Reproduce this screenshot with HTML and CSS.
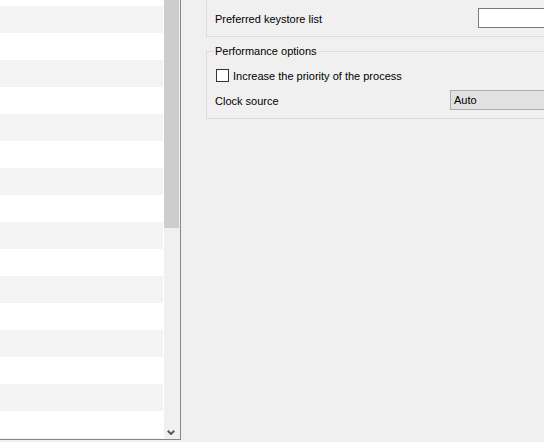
FILE: index.html
```html
<!DOCTYPE html>
<html>
<head>
<meta charset="utf-8">
<link rel="stylesheet" href="styles.css">
</head>
<body>
<div class="window">
  <div class="list">
    <div class="rows">
      <div class="row"></div><div class="row"></div><div class="row"></div><div class="row"></div>
      <div class="row"></div><div class="row"></div><div class="row"></div><div class="row"></div>
      <div class="row"></div><div class="row"></div><div class="row"></div><div class="row"></div>
      <div class="row"></div><div class="row"></div><div class="row"></div><div class="row"></div>
      <div class="row"></div><div class="row"></div>
    </div>
    <div class="scrollbar">
      <div class="thumb"></div>
      <div class="track"></div>
      <div class="arrow">
        <svg width="8" height="5" viewBox="0 0 8 5"><polyline points="0.8,0.8 4,4 7.2,0.8" fill="none" stroke="#5a5a5a" stroke-width="2"/></svg>
      </div>
    </div>
  </div>
  <div class="panel">
    <div class="group-top">
      <span class="label label-keystore">Preferred keystore list</span>
      <span class="textbox"></span>
    </div>
    <fieldset class="group-perf">
      <legend>Performance options</legend>
      <div class="check-row">
        <span class="checkbox"></span>
        <span class="check-label">Increase the priority of the process</span>
      </div>
      <div class="field-row">
        <span class="label label-clock">Clock source</span>
        <span class="combo">Auto</span>
      </div>
    </fieldset>
  </div>
</div>
</body>
</html>
```
FILE: styles.css
```css
html, body {
  margin: 0;
  height: 100%;
  overflow: hidden;
  background: #f0f0f0;
}
body {
  font-family: "Liberation Sans", Arial, sans-serif;
  font-size: 11px;
  line-height: 13px;
  color: #000;
}
.window {
  display: flex;
  align-items: flex-start;
  width: 544px;
  height: 442px;
  overflow: hidden;
}
.list {
  display: flex;
  flex: none;
  width: 180px;
  height: 439px;
  background: #fff;
  border-right: 1px solid #828790;
  border-bottom: 1px solid #828790;
}
.rows {
  width: 164px;
  height: 439px;
  overflow: hidden;
  display: flex;
  flex-direction: column;
  flex: none;
}
.row {
  width: 163px;
  height: 27px;
  flex: none;
  background: #fff;
}
.row:first-child {
  margin-top: -21px;
}
.row:nth-child(even) {
  background: #f3f3f3;
}
.scrollbar {
  width: 16px;
  flex: none;
  display: flex;
  flex-direction: column;
  background: #f0f0f0;
}
.thumb {
  width: 15px;
  height: 228px;
  background: #cdcdcd;
}
.track {
  flex: 1;
}
.arrow {
  height: 9px;
  padding: 8px 0 0 3px;
  display: flex;
  align-items: flex-start;
}
.arrow svg {
  display: block;
}
.panel {
  flex: 1;
  min-width: 0;
  height: 442px;
  overflow: hidden;
  padding-left: 25px;
  display: flex;
  flex-direction: column;
  align-items: flex-start;
}
.group-top {
  display: flex;
  align-items: flex-start;
  width: 600px;
  flex: none;
  padding: 8px 0 8px 8px;
  border-left: 1px solid #dcdcdc;
  border-bottom: 1px solid #dcdcdc;
}
.label {
  flex: none;
  white-space: nowrap;
}
.label-keystore {
  width: 263px;
  margin-top: 5px;
}
.textbox {
  flex: none;
  width: 120px;
  height: 18px;
  border: 1px solid #7a7a7a;
  background: #fff;
}
.group-perf {
  margin: 8px 0 0 0;
  padding: 11px 0 8px 7px;
  width: 600px;
  min-width: 0;
  border: 1px solid #dcdcdc;
}
.group-perf legend {
  padding: 0 2px 0 1px;
  line-height: 13px;
}
.check-row {
  display: flex;
  align-items: flex-start;
  margin-left: 2px;
}
.checkbox {
  flex: none;
  width: 11px;
  height: 11px;
  border: 1px solid #333;
  background: #fff;
}
.check-label {
  margin-left: 4px;
  margin-top: 1px;
  white-space: nowrap;
}
.field-row {
  display: flex;
  align-items: flex-start;
  margin-top: 7px;
}
.label-clock {
  width: 235px;
  margin-left: 1px;
  margin-top: 5px;
}
.combo {
  flex: none;
  width: 117px;
  height: 17px;
  padding: 1px 0 0 3px;
  line-height: 17px;
  border: 1px solid #adadad;
  background: #e1e1e1;
}
```
